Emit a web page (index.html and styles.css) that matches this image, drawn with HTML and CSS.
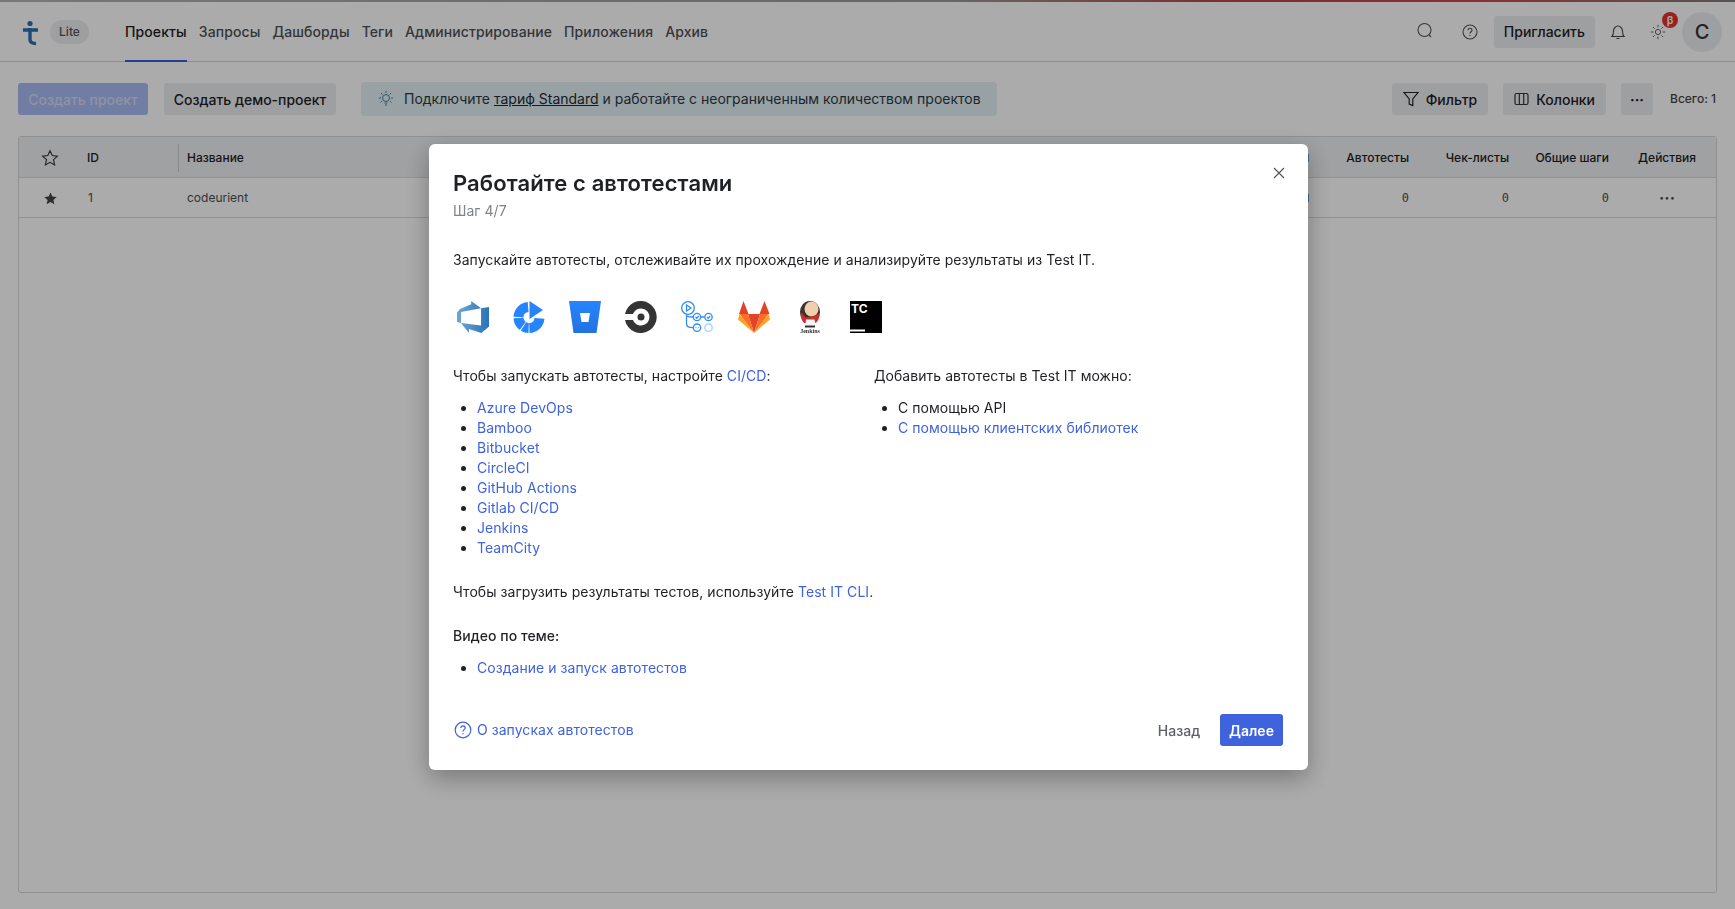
FILE: index.html
```html
<!DOCTYPE html>
<html>

<head>
    <title>Test IT</title>
    <link rel="stylesheet" href="styles.css">
</head>

<body>
    <div class="top-strip"></div>
    <!-- Header -->
    <header class="header">
        <div class="logo">
            <svg width="22" height="28" viewBox="0 0 22 28">
                <circle cx="10" cy="5.500" r="2.600" fill="#2a6fb5" />
                <path d="M3 12h15M10 10v11.500c0 3 2 4 6 4" fill="none" stroke="#2a6fb5" stroke-width="3.400" />
            </svg>
        </div>
        <span class="lite">Lite</span>
        <nav class="nav">
            <a class="nav-item active">Проекты</a>
            <a class="nav-item">Запросы</a>
            <a class="nav-item">Дашборды</a>
            <a class="nav-item">Теги</a>
            <a class="nav-item">Администрирование</a>
            <a class="nav-item">Приложения</a>
            <a class="nav-item">Архив</a>
        </nav>
        <div class="header-right">
            <svg class="search-icon" width="18" height="18" viewBox="0 0 18 18" fill="none" stroke="#555" stroke-width="1.100">
                <circle cx="8.500" cy="8" r="6.500" />
                <path d="M13 13l2 2" />
            </svg>
            <svg class="help-icon" width="16" height="16" viewBox="0 0 16 16" fill="none" stroke="#555" stroke-width="1.100">
                <circle cx="8" cy="8" r="7" />
                <path d="M6 6.300c0-1.300 1-2 2-2s2 .7 2 1.900c0 1.500-2 1.600-2 3.200M8 11v1" />
            </svg>
            <button class="btn invite">Пригласить</button>
            <svg class="bell-icon" width="16" height="16" viewBox="0 0 16 16" fill="none" stroke="#444" stroke-width="1.100">
                <path d="M2 12.500c1.500-1.500 1.500-3 1.500-5.500s2-5 4.500-5 4.500 2.500 4.500 5 0 4 1.500 5.500zM6.500 14.500h3" />
            </svg>
            <div class="sun-wrap">
                <svg width="16" height="16" viewBox="0 0 16 16" fill="none" stroke="#666" stroke-width="1">
                    <circle cx="8" cy="8" r="2.600" />
                    <path d="M8 .8v2.500M8 12.700v2.500M.8 8h2.500M12.700 8h2.500M3 3l1.600 1.600M11.400 11.400L13 13M3 13l1.600-1.600M11.400 4.600L13 3" />
                </svg>
                <span class="beta">β</span>
            </div>
            <div class="avatar">С</div>
        </div>
    </header>

    <!-- Toolbar -->
    <div class="toolbar">
        <button class="btn create" disabled>Создать проект</button>
        <button class="btn demo">Создать демо-проект</button>
        <div class="promo">
            <svg width="18" height="18" viewBox="0 0 18 18" fill="none" stroke="#4d8196" stroke-width="1">
                <circle cx="9" cy="8" r="3.500" />
                <path d="M7.500 13h3M8 15h2M9 1v2M2 8h2M14 8h2M4 3l1.400 1.400M14 3l-1.400 1.400M3.500 12.500l1.400-1.400M14.500 12.500l-1.400-1.400" />
            </svg>
            <span>Подключите <a class="promo-link">тариф Standard</a> и работайте с неограниченным количеством проектов</span>
        </div>
        <div class="toolbar-right">
            <button class="btn tool">
                <svg width="16" height="16" viewBox="0 0 16 16" fill="none" stroke="#222" stroke-width="1.200">
                    <path d="M1 1.500h14L9.800 8v6.500l-3.600-1.500V8z" />
                </svg>
                Фильтр
            </button>
            <button class="btn tool">
                <svg width="15" height="14" viewBox="0 0 15 14" fill="none" stroke="#333" stroke-width="1.200">
                    <rect x="1" y="1.500" width="13" height="11" rx="1.500" />
                    <path d="M5.300 1.500v11M9.700 1.500v11" />
                </svg>
                Колонки
            </button>
            <button class="btn more">···</button>
            <span class="total">Всего: 1</span>
        </div>
    </div>

    <!-- Projects table -->
    <div class="table">
        <div class="row head-row">
            <div class="cell-star">
                <svg width="18" height="18" viewBox="0 0 18 18" fill="none" stroke="#333" stroke-width="1.100">
                    <path d="M9 1.800l2.200 4.800 5.200.6-3.900 3.500 1.100 5.200L9 13.300l-4.600 2.600 1.100-5.200L1.600 7.200l5.200-.6z" />
                </svg>
            </div>
            <div class="cell-id">ID</div>
            <div class="cell-name">Название</div>
            <div class="peek"></div>
            <div class="cell-num">Автотесты</div>
            <div class="cell-num">Чек-листы</div>
            <div class="cell-num">Общие шаги</div>
            <div class="cell-act">Действия</div>
        </div>
        <div class="row body-row">
            <div class="cell-star">
                <svg width="15" height="15" viewBox="0 0 18 18" fill="#444">
                    <path d="M9 1.800l2.200 4.800 5.200.6-3.900 3.500 1.100 5.200L9 13.300l-4.600 2.600 1.100-5.200L1.600 7.200l5.200-.6z" />
                </svg>
            </div>
            <div class="cell-id">1</div>
            <div class="cell-name">codeurient</div>
            <div class="peek"></div>
            <div class="cell-num mono">0</div>
            <div class="cell-num mono">0</div>
            <div class="cell-num mono">0</div>
            <div class="cell-act dots">···</div>
        </div>
    </div>

    <div class="overlay"></div>

    <!-- Onboarding modal -->
    <div class="modal">
        <svg class="close" width="12" height="12" viewBox="0 0 12 12" fill="none" stroke="#555" stroke-width="1.200">
            <path d="M1 1l10 10M11 1L1 11" />
        </svg>
        <h2 class="modal-title">Работайте с автотестами</h2>
        <div class="step">Шаг 4/7</div>
        <p class="intro">Запускайте автотесты, отслеживайте их прохождение и анализируйте результаты из Test IT.</p>

        <div class="logos">
            <!-- Azure DevOps -->
            <svg width="32" height="32" viewBox="0 0 24 24">
                <defs>
                    <linearGradient id="azure" x1="0" y1="0" x2="1" y2="0">
                        <stop offset="0" stop-color="#6ba5d8" />
                        <stop offset="1" stop-color="#2a74ba" />
                    </linearGradient>
                </defs>
                <path d="M0 8.877L2.247 5.910l8.405-3.416V.022l7.370 5.393L2.966 8.338v8.225L0 15.707zm24-4.450v14.651l-5.753 4.900-9.303-3.057v3.056l-5.978-7.416 15.057 1.798V5.415z" fill="url(#azure)" />
            </svg>
            <!-- Bamboo -->
            <svg width="32" height="32" viewBox="0 0 32 32">
                <path d="M16.500 0L30 9 16.500 18z" fill="#2684ff" />
                <circle cx="16" cy="16.500" r="10.500" fill="none" stroke="#2684ff" stroke-width="10" pathLength="360" stroke-dasharray="83 4 30 5 50 6 82 100" stroke-dashoffset="-5" />
            </svg>
            <!-- Bitbucket -->
            <svg width="32" height="32" viewBox="0 0 32 32">
                <defs>
                    <linearGradient id="bitbucket" x1="0" y1="0" x2="0" y2="1">
                        <stop offset="0" stop-color="#2684ff" />
                        <stop offset="1" stop-color="#2272e0" />
                    </linearGradient>
                </defs>
                <path d="M0 0h32l-4.500 32h-23z" fill="url(#bitbucket)" />
                <path d="M11 12h10l-1.500 9h-7z" fill="#fff" />
            </svg>
            <!-- CircleCI -->
            <svg width="32" height="32" viewBox="0 0 32 32">
                <path d="M0 13a16 16 0 1 1 0 6h8a8.500 8.500 0 1 0 0-6z" fill="#343434" />
                <circle cx="16" cy="16" r="3.500" fill="#343434" />
            </svg>
            <!-- GitHub Actions -->
            <svg width="33" height="32" viewBox="0 0 33 32" fill="none" stroke="#2f8cf5" stroke-width="1.300">
                <circle cx="7" cy="7" r="6.300" />
                <path d="M5.500 4l4.500 3-4.500 3zM5.500 13.500v9c0 2.500 1.500 4.200 6.500 4.200M5.500 13.500c0 2 1 2.500 6.500 2.500M20 16h3.500" />
                <circle cx="16" cy="16" r="3.700" />
                <circle cx="27.500" cy="16" r="3.700" />
                <circle cx="16" cy="26.700" r="3.700" />
                <circle cx="27.500" cy="26.700" r="3.700" stroke="#a9d0fb" />
                <path d="M14.500 16l1.200 1.200 2-2.200M26 16l1.200 1.200 2-2.200M14.500 26.700h.8M16.800 26.700h.8" />
            </svg>
            <!-- GitLab -->
            <svg width="32" height="32" viewBox="0 0 32 32">
                <path d="M5.500 0l5 13H1z" fill="#e24329" />
                <path d="M26.500 0l5 13h-10z" fill="#e24329" />
                <path d="M10 13h12l-6 19z" fill="#e24329" />
                <path d="M1.500 13H10l6 19z" fill="#fc6d26" />
                <path d="M30.500 13H22l-6 19z" fill="#fc6d26" />
                <path d="M1.500 13L0 18.500 16 32z" fill="#fca326" />
                <path d="M30.500 13l1.500 5.500L16 32z" fill="#fca326" />
            </svg>
            <!-- Jenkins -->
            <svg class="jenkins" width="22" height="33" viewBox="0 0 22 33">
                <ellipse cx="11" cy="11" rx="10" ry="11" fill="#3a3230" />
                <ellipse cx="12.500" cy="8" rx="7" ry="7.500" fill="#efcfae" />
                <path d="M1.500 12c2 0 3.500 3 5 4.500l7-1 5-2.500 2 1c0 4-2.500 7-4 8H5c-2-2-3.500-5.500-3.500-10z" fill="#cc2f2b" />
                <path d="M7 18.500h8.500l1.500 7H6.500z" fill="#f4f4f4" />
                <path d="M6 24.500h10v2H6z" fill="#3a3230" />
                <text x="11" y="32" class="jenkins-text">Jenkins</text>
            </svg>
            <!-- TeamCity -->
            <svg class="teamcity" width="32" height="32" viewBox="0 0 32 32">
                <rect width="32" height="32" fill="#000" />
                <rect x="0" y="28.500" width="15" height="2" fill="#fff" />
                <text x="1" y="12" class="tc-text">TC</text>
            </svg>
        </div>

        <div class="columns">
            <div class="col-left">
                <p class="lead">Чтобы запускать автотесты, настройте <a class="link">CI/CD</a>:</p>
                <ul class="list">
                    <li><a class="link">Azure DevOps</a></li>
                    <li><a class="link">Bamboo</a></li>
                    <li><a class="link">Bitbucket</a></li>
                    <li><a class="link">CircleCI</a></li>
                    <li><a class="link">GitHub Actions</a></li>
                    <li><a class="link">Gitlab CI/CD</a></li>
                    <li><a class="link">Jenkins</a></li>
                    <li><a class="link">TeamCity</a></li>
                </ul>
            </div>
            <div class="col-right">
                <p class="lead">Добавить автотесты в Test IT можно:</p>
                <ul class="list">
                    <li>С помощью API</li>
                    <li><a class="link">С помощью клиентских библиотек</a></li>
                </ul>
            </div>
        </div>

        <p class="cli">Чтобы загрузить результаты тестов, используйте <a class="link">Test IT CLI</a>.</p>
        <p class="video-title">Видео по теме:</p>
        <ul class="list">
            <li><a class="link">Создание и запуск автотестов</a></li>
        </ul>

        <div class="modal-footer">
            <a class="link about">
                <svg width="18" height="18" viewBox="0 0 18 18" fill="none" stroke="#3f63dd" stroke-width="1.200">
                    <circle cx="9" cy="9" r="7.800" />
                    <path d="M6.800 7c0-1.400 1.100-2.200 2.200-2.200s2.200.8 2.200 2.100c0 1.700-2.200 1.800-2.200 3.500M9 12v1.200" />
                </svg>
                О запусках автотестов
            </a>
            <div class="footer-btns">
                <button class="btn back">Назад</button>
                <button class="btn next">Далее</button>
            </div>
        </div>
    </div>
</body>
</html>
```

FILE: styles.css
```css
/* Page */
html, body {
    height: 100%;
}

body {
    margin: 0;
    font-family: Inter, "Noto Sans", sans-serif;
    font-size: 14px;
    line-height: 20px;
    color: #1f2024;
    background-color: #fff;
    overflow: hidden;
}

a {
    text-decoration: none;
}

.top-strip {
    height: 2px;
    background: linear-gradient(90deg, #777 0%, #666 55%, #7a3030 70%, #883030 85%, #555 100%);
}

.btn {
    font-family: inherit;
    font-size: 14px;
    font-weight: 500;
    height: 32px;
    padding: 0 11px;
    border: none;
    border-radius: 3px;
    color: #1f2024;
    background-color: #eceef1;
    display: inline-flex;
    align-items: center;
    white-space: nowrap;
}

/* Header */
.header {
    height: 59px;
    padding: 0 13px 0 20px;
    display: flex;
    align-items: center;
    border-bottom: 1px solid #d6d6d6;
}

.logo {
    width: 30px;
    height: 28px;
}

.lite {
    width: 39px;
    height: 24px;
    border-radius: 12px;
    background-color: #eceef1;
    color: #555;
    font-size: 12px;
    line-height: 24px;
    text-align: center;
    font-weight: 500;
}

.nav {
    display: flex;
    gap: 12px;
    margin-left: 36px;
    height: 59px;
    margin-bottom: -1px;
    letter-spacing: 0.1px;
}

.nav-item {
    font-weight: 500;
    color: #4d4f55;
    line-height: 58px;
    height: 57px;
}

.nav-item.active {
    color: #1f2024;
    border-bottom: 2px solid #3d5fd9;
}

.header-right {
    margin-left: auto;
    display: flex;
    align-items: center;
}

.search-icon {
    margin-right: 28px;
    margin-top: -1px;
}

.help-icon {
    margin-right: 16px;
    margin-top: 1px;
}

.invite {
    padding: 0 10px;
    margin-right: 15px;
}

.bell-icon {
    margin-right: 24px;
    margin-top: 1px;
}

.sun-wrap {
    position: relative;
    width: 16px;
    height: 16px;
    margin-right: 16px;
    margin-top: 1px;
}

.beta {
    position: absolute;
    top: -12px;
    left: 12px;
    width: 16px;
    height: 16px;
    border-radius: 50%;
    background-color: #e3342f;
    color: #fff;
    font-size: 11px;
    line-height: 16px;
    text-align: center;
    font-weight: 600;
}

.avatar {
    width: 40px;
    height: 40px;
    border-radius: 50%;
    background-color: #eceef1;
    color: #333;
    font-size: 20px;
    line-height: 40px;
    text-align: center;
    font-weight: 500;
}

/* Toolbar */
.toolbar {
    padding: 21px 19px 21px 18px;
    display: flex;
    align-items: center;
    height: 32px;
}

.create {
    width: 130px;
    justify-content: center;
    background-color: #a9bbf3;
    color: #d4dcf7;
    margin-right: 16px;
    padding: 0;
}

.demo {
    width: 172px;
    justify-content: center;
    margin-right: 25px;
    padding: 0;
}

.promo {
    height: 34px;
    padding: 0 16px;
    display: flex;
    align-items: center;
    gap: 9px;
    border-radius: 4px;
    background-color: #e3f0f5;
    color: #2b3a44;
}

.promo-link {
    color: #1f2a33;
    text-decoration: underline;
}

.toolbar-right {
    margin-left: auto;
    display: flex;
    align-items: center;
}

.tool {
    gap: 7px;
    margin-right: 15px;
}

.more {
    width: 32px;
    padding: 0;
    justify-content: center;
    font-weight: 700;
    margin-right: 17px;
}

.total {
    font-size: 12px;
    font-weight: 500;
    color: #444;
}

/* Table */
.table {
    margin: 0 18px;
    height: 757px;
    border: 1px solid #d8d8d8;
    border-radius: 3px;
    box-sizing: border-box;
}

.row {
    display: flex;
    align-items: center;
    font-size: 12px;
    box-sizing: border-box;
    padding-top: 1px;
    border-bottom: 1px solid #dcdcdc;
}

.head-row {
    height: 41px;
    background-color: #eef0f3;
    font-weight: 500;
}

.body-row {
    height: 40px;
    color: #4b4d52;
}

.cell-star {
    width: 62px;
    display: flex;
    justify-content: center;
}

.cell-id {
    width: 98px;
    padding-left: 6px;
    box-sizing: border-box;
    height: 28px;
    line-height: 28px;
    border-right: 1px solid #ccc;
}

.body-row .cell-id {
    border-right: none;
    padding-left: 7px;
}

.cell-name {
    flex: 1;
    padding-left: 8px;
}

.peek {
    width: 3px;
    height: 8px;
    background-color: #5fa0dc;
}

.cell-num {
    width: 100px;
    text-align: right;
}

.mono {
    font-family: "DejaVu Sans Mono", monospace;
    font-size: 12px;
}

.cell-act {
    width: 107px;
    text-align: right;
    padding-right: 20px;
    box-sizing: border-box;
}

.dots {
    font-size: 16px;
    font-weight: 700;
    padding-right: 41px;
}

/* Modal */
.overlay {
    position: fixed;
    top: 2px;
    left: 0;
    right: 0;
    bottom: 0;
    background-color: rgba(0, 0, 0, 0.33);
}

.modal {
    position: fixed;
    top: 144px;
    left: 429px;
    width: 879px;
    height: 626px;
    padding: 24px;
    box-sizing: border-box;
    border-radius: 6px;
    background-color: #fff;
    box-shadow: 0 8px 24px rgba(0, 0, 0, 0.3);
    letter-spacing: 0.05px;
}

.close {
    position: absolute;
    top: 23px;
    right: 23px;
}

.modal-title {
    margin: 0;
    font-size: 22px;
    line-height: 30px;
    font-weight: 600;
    letter-spacing: 0.1px;
    color: #1f2024;
}

.step {
    margin-top: 3px;
    color: #80838a;
}

.intro {
    margin: 29px 0 0;
}

.logos {
    margin-top: 31px;
    height: 32px;
    display: flex;
    gap: 24px;
    padding-left: 4px;
}

.jenkins {
    margin: 0 5px;
}

.jenkins-text {
    font-family: "Liberation Serif", serif;
    font-size: 6px;
    font-weight: 700;
    text-anchor: middle;
    fill: #333;
    letter-spacing: 0;
}

.tc-text {
    font-family: Inter, sans-serif;
    font-size: 12px;
    font-weight: 700;
    fill: #fff;
}

.columns {
    margin-top: 33px;
    display: flex;
}

.col-left {
    width: 421px;
}

.lead {
    margin: 0;
}

.list {
    margin: 12px 0 0;
    padding-left: 24px;
}

.link {
    color: #3f63dd;
}

.cli {
    margin: 24px 0 0;
}

.video-title {
    margin: 24px 0 0;
    font-weight: 500;
}

.modal-footer {
    position: absolute;
    left: 24px;
    right: 25px;
    bottom: 24px;
    display: flex;
    align-items: center;
    justify-content: space-between;
}

.about {
    display: flex;
    align-items: center;
    gap: 5px;
    padding-left: 1px;
}

.footer-btns {
    display: flex;
    gap: 10px;
}

.back {
    background: transparent;
    color: #5d6066;
    width: 62px;
    justify-content: center;
    padding: 0;
}

.next {
    width: 63px;
    justify-content: center;
    padding: 0;
    background-color: #3f63dd;
    color: #fff;
    font-weight: 600;
}
```
